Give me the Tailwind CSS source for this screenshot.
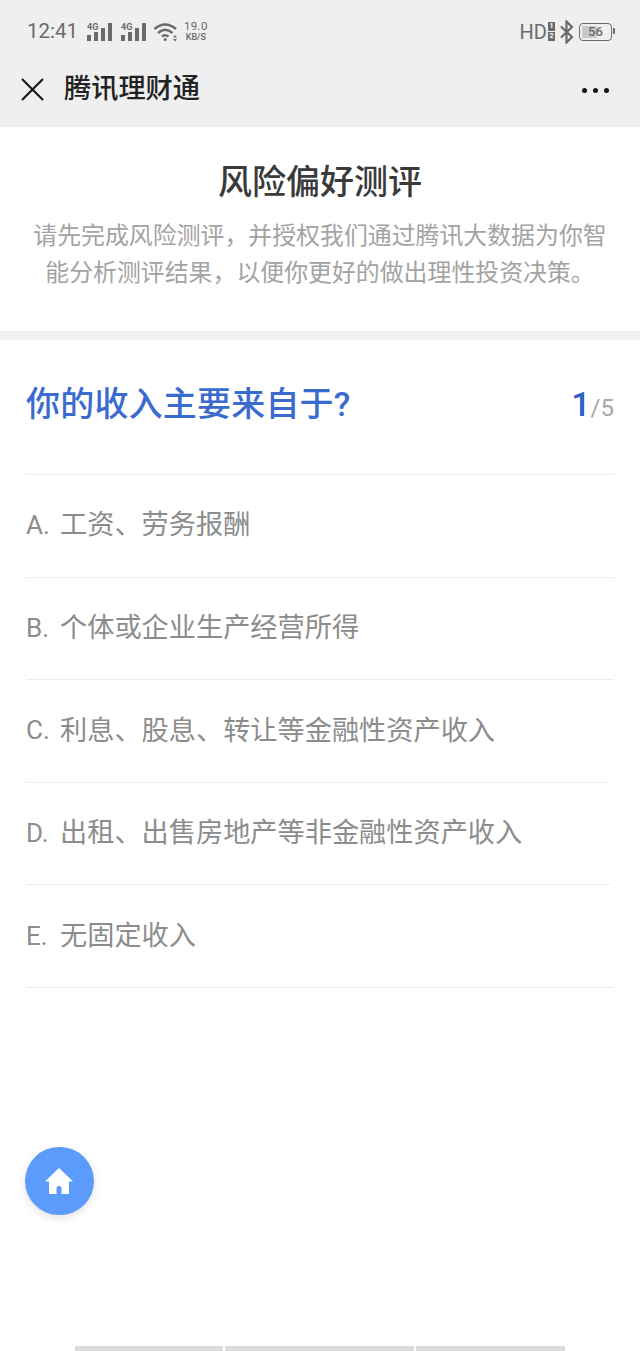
<!DOCTYPE html>
<html lang="zh-CN">
<head>
    <meta charset="UTF-8">
    <meta name="viewport" content="width=device-width, initial-scale=1.0">
    <title>腾讯理财通</title>
    <script src="https://cdn.jsdelivr.net/npm/@tailwindcss/browser@4"></script>
</head>
<body class="bg-white font-['Roboto','Noto_Sans_CJK_SC',sans-serif]">
    <div class="relative w-[640px] h-[1351px] overflow-hidden bg-white flex flex-col">

        <!-- Status bar -->
        <div class="h-[63px] bg-[#efefef] flex items-center justify-between pl-[27px] pr-[27px] text-[#6a6a6a]">
            <div class="flex items-center">
                <span class="text-[20.5px] leading-none">12:41</span>
                <svg class="ml-[9px]" width="27" height="20" viewBox="0 0 27 20" fill="#6a6a6a">
                    <text x="0" y="8" font-size="9" font-weight="700" font-family="Roboto">4G</text>
                    <rect x="0" y="13" width="4" height="6"/><rect x="7" y="10" width="4" height="9"/><rect x="14" y="6" width="4" height="13"/><rect x="21" y="1" width="4" height="18"/>
                </svg>
                <svg class="ml-[7px]" width="27" height="20" viewBox="0 0 27 20" fill="#6a6a6a">
                    <text x="0" y="8" font-size="9" font-weight="700" font-family="Roboto">4G</text>
                    <rect x="0" y="13" width="4" height="6"/><rect x="7" y="10" width="4" height="9"/><rect x="14" y="6" width="4" height="13"/><rect x="21" y="1" width="4" height="18"/>
                </svg>
                <svg class="ml-[5px]" width="26" height="20" viewBox="0 0 26 20" fill="none" stroke="#6a6a6a" stroke-width="2.6">
                    <path d="M1.5 7 Q12 -2 23 7"/>
                    <path d="M5 11 Q12 4.5 19.5 11"/>
                    <path d="M9 14.5 Q12 12 15.5 14.5"/>
                    <circle cx="12.2" cy="17.5" r="1.5" fill="#6a6a6a" stroke="none"/>
                    <path d="M20 15.5h4l-2-2.5zM20 17h4l-2 2.5z" fill="#6a6a6a" stroke="none"/>
                </svg>
                <div class="ml-[5px] flex flex-col items-center leading-none">
                    <span class="text-[11.5px] leading-[11px] tracking-[0.3px]">19.0</span>
                    <span class="text-[9px] leading-[10px] font-medium">KB/S</span>
                </div>
            </div>
            <div class="flex items-center">
                <span class="text-[20px] leading-none -ml-[2px]">HD</span>
                <div class="ml-[1px] flex flex-col gap-[1px]">
                    <span class="w-[7px] h-[9px] bg-[#6a6a6a] text-white text-[7px] leading-[9px] text-center font-bold">1</span>
                    <span class="w-[7px] h-[9px] bg-[#6a6a6a] text-white text-[7px] leading-[9px] text-center font-bold">2</span>
                </div>
                <svg class="ml-[5px]" width="14" height="24" viewBox="0 0 14 24" fill="none" stroke="#6a6a6a" stroke-width="2.2">
                    <path d="M1 6.5 12 17 6.5 22.5V1.5L12 7 1 17.5"/>
                </svg>
                <div class="relative ml-[5px] mr-[1px] w-[33px] h-[18px] border-[1.5px] border-[#6a6a6a] rounded-[4px] flex items-center p-[2px]">
                    <div class="h-full w-[55%] bg-[#c9c9c9] rounded-[1px]"></div>
                    <span class="absolute inset-0 text-center text-[13px] leading-[15px] font-medium">56</span>
                    <div class="absolute -right-[4px] top-[4px] w-[2px] h-[6px] bg-[#6a6a6a] rounded-r-[1px]"></div>
                </div>
            </div>
        </div>

        <!-- Nav bar -->
        <div class="h-[64px] bg-[#efefef] flex items-center justify-between pl-[21px] pr-[31px] pb-[10px]">
            <div class="flex items-center">
                <svg width="23" height="23" viewBox="0 0 23 23" stroke="#1a1a1a" stroke-width="2.2" fill="none">
                    <path d="M1 1 22 22M22 1 1 22"/>
                </svg>
                <span class="ml-[20px] text-[27.2px] leading-none font-medium text-[#222]">腾讯理财通</span>
            </div>
            <div class="flex items-center gap-[6px]">
                <span class="w-[5px] h-[5px] rounded-full bg-[#111]"></span>
                <span class="w-[5px] h-[5px] rounded-full bg-[#111]"></span>
                <span class="w-[5px] h-[5px] rounded-full bg-[#111]"></span>
            </div>
        </div>

        <!-- Intro -->
        <div class="h-[213px] border-b-[9px] border-[#f1f1f1] flex flex-col items-center">
            <h1 class="mt-[32px] text-[34px] leading-[46px] font-medium text-[#3a3a3a]">风险偏好测评</h1>
            <p class="mt-[13px] w-[580px] text-center text-[23.9px] leading-[37px] text-[#a3a3a3]">请先完成风险测评，并授权我们通过腾讯大数据为你智能分析测评结果，以便你更好的做出理性投资决策。</p>
        </div>

        <!-- Question header -->
        <div class="mx-[26px] h-[135px] flex justify-between pt-[40px] border-b border-[#ececec]">
            <h2 class="text-[34px] tracking-[0.2px] leading-[48px] font-medium text-[#3a6bcf]">你的收入主要来自于?</h2>
            <div class="leading-[48px] text-[#a8a8a8] text-[24px]"><span class="text-[34px] font-medium text-[#2f62c9]">1</span>/5</div>
        </div>

        <!-- Options -->
        <ul class="mx-[26px] text-[27.2px] text-[#8c8c8c]">
            <li class="h-[102.6px] flex items-center border-b border-[#ececec]"><span class="w-[34px] text-[26px]">A.</span><span>工资、劳务报酬</span></li>
            <li class="h-[102.6px] flex items-center border-b border-[#ececec]"><span class="w-[34px] text-[26px]">B.</span><span>个体或企业生产经营所得</span></li>
            <li class="h-[102.6px] flex items-center border-b border-[#ececec] mr-[4px]"><span class="w-[34px] text-[26px]">C.</span><span>利息、股息、转让等金融性资产收入</span></li>
            <li class="h-[102.6px] flex items-center border-b border-[#ececec] mr-[4px]"><span class="w-[34px] text-[26px]">D.</span><span>出租、出售房地产等非金融性资产收入</span></li>
            <li class="h-[102.6px] flex items-center border-b border-[#ececec]"><span class="w-[34px] text-[26px]">E.</span><span>无固定收入</span></li>
        </ul>

        <!-- Floating home button -->
        <button class="absolute left-[25px] top-[1147px] w-[69px] h-[68px] rounded-full bg-[#5b9bfb] shadow-[0_3px_8px_rgba(0,0,0,0.12)] flex items-center justify-center">
            <svg class="-ml-[2px]" width="28" height="26" viewBox="0 0 28 26" fill="#fff">
                <path fill-rule="evenodd" d="M14 0 28 13.5H24V26H4V13.5H0ZM11.5 26V19.5Q14 16 16.5 19.5V26Z"/>
            </svg>
        </button>

        <!-- Cut-off tabs at the bottom edge -->
        <div class="absolute left-[75px] bottom-0 w-[490px] h-[5px] flex gap-[2px]">
            <div class="w-[148px] bg-[#dcdcdc]"></div>
            <div class="w-[189px] bg-[#dcdcdc]"></div>
            <div class="flex-1 bg-[#dcdcdc]"></div>
        </div>
    </div>
</body>
</html>
